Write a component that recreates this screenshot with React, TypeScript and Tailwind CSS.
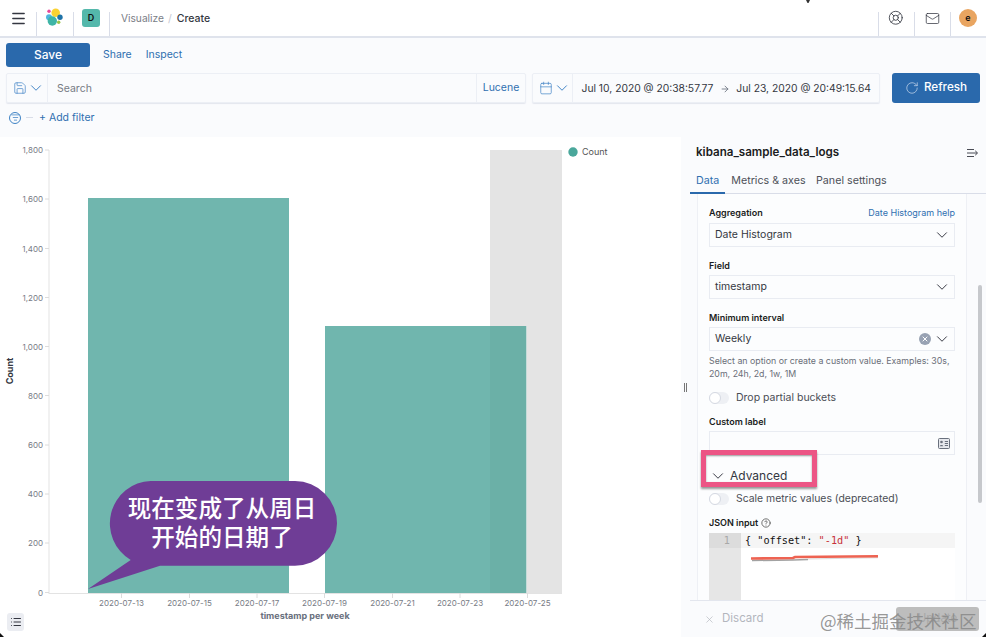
import React from "react";
import { ChevronDown, Menu, LifeBuoy, Mail, Save, Calendar, RotateCw, ArrowRight, X, List, CircleHelp, ListFilter } from "lucide-react";

const Chev = ({ className = "" }: { className?: string }) => (
  <ChevronDown size={18} strokeWidth={1.3} className={`-mx-[4px] -my-[3px] shrink-0 ${className}`} />
);

function Logo() {
  return (
    <svg width="20" height="20" viewBox="0 0 20 20">
      <circle cx="10.7" cy="4.7" r="4.3" fill="#fbd232" />
      <circle cx="4" cy="3.3" r="1.7" fill="#e8499b" />
      <circle cx="4" cy="9.3" r="3" fill="#4fb6e0" />
      <circle cx="15" cy="9.3" r="2.7" fill="#1f73a8" />
      <circle cx="7.3" cy="13" r="4.7" fill="#3fb5a6" />
      <circle cx="13.7" cy="14.3" r="1.7" fill="#9ac54a" />
    </svg>
  );
}

function Header() {
  return (
    <div className="flex h-[38px] items-stretch border-b-2 border-[#dfe3ec] bg-white text-[10.5px]">
      <div className="flex w-[36px] items-center justify-center">
        <Menu size={17} className="text-[#343741]" strokeWidth={2} />
      </div>
      <div className="mt-[12px] w-px bg-[#d9dde8]" />
      <div className="flex w-[36px] items-center justify-center"><Logo /></div>
      <div className="mt-[12px] w-px bg-[#d9dde8]" />
      <div className="flex w-[35px] items-center justify-center pr-[1px]">
        <div className="flex h-[18px] w-[18px] items-center justify-center rounded-[3px] bg-[#54b8ab] text-[9px] font-semibold text-[#111]">D</div>
      </div>
      <div className="mt-[12px] w-px bg-[#d9dde8]" />
      <div className="flex flex-1 items-center gap-[4px] pl-[11px] pt-[1px]">
        <span className="text-[10.2px] text-[#7a7d86]">Visualize</span>
        <span className="text-[#c5c9d2]">/</span>
        <span className="ml-[1px] font-medium text-[#343741]">Create</span>
      </div>
      <div className="mt-[12px] w-px bg-[#d9dde8]" />
      <div className="flex w-[35px] items-center justify-center pr-[1px]"><LifeBuoy size={15.5} strokeWidth={1.3} className="text-[#343741]" /></div>
      <div className="mt-[12px] w-px bg-[#d9dde8]" />
      <div className="flex w-[35px] items-center justify-center pr-[1px]"><Mail size={15} strokeWidth={1.2} className="text-[#343741]" /></div>
      <div className="mt-[12px] w-px bg-[#d9dde8]" />
      <div className="flex w-[35px] items-center justify-center pr-[1px]">
        <div className="flex h-[18px] w-[18px] items-center justify-center rounded-full bg-[#e9a561] text-[9px] font-semibold text-[#111]">e</div>
      </div>
    </div>
  );
}

function Toolbar() {
  return (
    <div className="bg-[#fafbfd] px-[6px]">
      <div className="mt-[5px] flex h-[24px] items-center gap-[13px] text-[10.5px] text-[#2f6fb0]">
        <div className="flex h-[24px] w-[84px] items-center justify-center rounded-[3px] bg-[#2a69ac] text-[12px] font-medium text-white">Save</div>
        <span>Share</span>
        <span className="ml-[1px]">Inspect</span>
      </div>
      <div className="mt-[6px] flex h-[30px] items-stretch text-[10.5px]">
        <div className="flex flex-1 items-stretch rounded-[2px] border border-[#eceff5] shadow-[0_1px_1px_#e3e6ee]">
          <div className="flex w-[41px] items-center justify-center gap-[4px] border-r border-[#eceff5] text-[#3f83c5]">
            <Save size={14} strokeWidth={1.2} />
            <Chev />
          </div>
          <div className="flex flex-1 items-center pl-[9px] pt-[1px] text-[#777b85]">Search</div>
          <div className="flex w-[49px] items-center justify-center border-l border-[#eceff5] text-[#2f6fb0]">Lucene</div>
        </div>
        <div className="ml-[6px] flex w-[348px] items-stretch rounded-[2px] border border-[#eceff5] shadow-[0_1px_1px_#e3e6ee]">
          <div className="flex w-[40px] items-center justify-center gap-[4px] border-r border-[#eceff5] text-[#3f83c5]">
            <Calendar size={14} strokeWidth={1.2} />
            <Chev />
          </div>
          <div className="flex flex-1 items-center gap-[6.5px] pl-[8.5px] pt-[1px] text-[10.3px] text-[#343741]">
            <span>Jul 10, 2020 @ 20:38:57.77</span>
            <ArrowRight size={10} className="text-[#69707d]" />
            <span>Jul 23, 2020 @ 20:49:15.64</span>
          </div>
        </div>
        <div className="ml-[12px] flex w-[88px] items-center justify-center gap-[5px] rounded-[3px] bg-[#2a69ac] text-[11.7px] font-medium text-white">
          <RotateCw size={14} strokeWidth={1.2} className="text-[#c9d9ec]" />
          <span>Refresh</span>
        </div>
      </div>
      <div className="flex h-[34px] items-center pb-[5px] pl-[3px] text-[10.5px] text-[#2f6fb0]">
        <div className="flex h-[12px] w-[12px] items-center justify-center rounded-full border border-[#3f83c5]"><ListFilter size={9} className="text-[#3f83c5]" /></div>
        <div className="ml-[5px] h-px w-[7px] bg-[#d9dde8]" />
        <span className="ml-[6px]">+ Add filter</span>
      </div>
    </div>
  );
}

function Chart() {
  const ys: [string, number][] = [["1,800",150],["1,600",199],["1,400",248.5],["1,200",297.5],["1,000",346.5],["800",395.5],["600",445],["400",494],["200",543],["0",592.5]];
  const xs: [string, number][] = [["2020-07-13",121.5],["2020-07-15",189.5],["2020-07-17",257],["2020-07-19",324.5],["2020-07-21",392.5],["2020-07-23",460],["2020-07-25",527.5]];
  return (
    <div className="relative h-[500px] w-[681px] shrink-0 bg-white">
      <svg width="681" height="500" viewBox="0 137 681 500" className="block" fontFamily="Inter, sans-serif">
        <rect x="490" y="150" width="72" height="443" fill="#e4e4e4" />
        <rect x="88" y="198" width="201" height="395" fill="#70b6ae" />
        <rect x="325" y="326" width="201" height="267" fill="#70b6ae" />
        <rect x="490" y="326" width="36" height="267" fill="#6bb0a7" />
        <rect x="526" y="326" width="1" height="267" fill="#c5dcd9" />
        <path d="M49 150V594M49 593.5H562" stroke="#e3e3e3" strokeWidth="1" fill="none" />
        {ys.map(([t, y]) => (
          <g key={t}>
            <line x1="45" x2="49" y1={y} y2={y} stroke="#dcdcdc" />
            <text x="43" y={y + 3} textAnchor="end" fontSize="8" fill="#777b85">{t}</text>
          </g>
        ))}
        {xs.map(([t, x]) => (
          <g key={t}>
            <line x1={x} x2={x} y1="593" y2="598" stroke="#dcdcdc" />
            <text x={x} y="606" textAnchor="middle" fontSize="8" fill="#777b85">{t}</text>
          </g>
        ))}
        <text x="305" y="619" textAnchor="middle" fontSize="9" fontWeight="700" fill="#69707d">timestamp per week</text>
        <text transform="translate(13 371) rotate(-90)" textAnchor="middle" fontSize="9" fontWeight="700" fill="#343741">Count</text>
        <circle cx="573" cy="152" r="4.7" fill="#4aa79b" />
        <text x="582" y="155" fontSize="9" fill="#555">Count</text>
      </svg>
      <div className="absolute bottom-[6px] left-[7px] flex h-[18px] w-[17px] items-center justify-center rounded-[3px] bg-[#ebedf2]">
        <List size={12} className="text-[#343741]" />
      </div>
      <svg className="absolute left-[85px] top-[343px]" width="256" height="112" viewBox="85 480 256 112">
        <path d="M160 565.7 L88 589 L130.7 560 A 42 42.4 0 0 1 150.7 481 H295 A 42 42.35 0 0 1 295 565.7 Z" fill="#6f3d96" />
      </svg>
      <div className="absolute left-[108px] top-[356px] w-[228px] text-center text-[23.6px] leading-[29px] font-medium text-white font-['Noto_Sans_CJK_SC',sans-serif]">
        <div>现在变成了从周日</div>
        <div>开始的日期了</div>
      </div>
    </div>
  );
}

function Select({ value, clear }: { value: string; clear?: boolean }) {
  return (
    <div className="flex h-[24px] items-center border border-[#e9ecf2] pl-[5px] pr-[7px] text-[10.5px] text-[#343741]">
      <span className="flex-1">{value}</span>
      {clear && (
        <div className="mr-[6px] flex h-[12px] w-[12px] items-center justify-center rounded-full bg-[#98a2b3]">
          <X size={8} strokeWidth={3} className="text-white" />
        </div>
      )}
      <Chev className="text-[#343741]" />
    </div>
  );
}

function Label({ children }: { children: React.ReactNode }) {
  return <div className="text-[9px] leading-[10px] font-semibold text-[#1a1c21]">{children}</div>;
}

function Toggle() {
  return (
    <div className="flex h-[12px] w-[20px] items-center rounded-full bg-[#eef0f4]">
      <div className="h-[12px] w-[12px] rounded-full border border-[#d5d9e2] bg-white" />
    </div>
  );
}

function CardIcon() {
  return (
    <svg width="12" height="11" viewBox="0 0 12 11" fill="none">
      <rect x="0.5" y="0.5" width="11" height="10" rx="1" fill="#e6e8ed" stroke="#69707d" />
      <circle cx="3.5" cy="4" r="1.3" fill="#69707d" />
      <path d="M1.8 8.2C2 6.6 5 6.6 5.2 8.2Z" fill="#69707d" />
      <path d="M6.8 3.5H10M6.8 5.5H10M6.8 7.5H10" stroke="#69707d" />
    </svg>
  );
}

function Panel() {
  return (
    <div className="relative flex h-[500px] flex-1 flex-col bg-[#fafbfd]">
      <div className="flex h-[31px] items-center justify-between pl-[6px] pr-[7px]">
        <span className="text-[11.6px] font-semibold text-[#1a1c21]">kibana_sample_data_logs</span>
        <svg width="12" height="10" viewBox="0 0 12 10" fill="none" stroke="#343741" strokeWidth="0.9"><path d="M0 1.5H7M0 5H10M0 8.5H7M8.2 2.8L10.6 5L8.2 7.2" /></svg>
      </div>
      <div className="flex h-[26px] items-center border-b border-[#d9dde8] pt-[2px] pl-[6px] text-[10.7px]">
        <div className="relative flex h-full items-center text-[#2f6fb0]">
          Data
          <div className="absolute -left-[6px] -right-[6px] bottom-[-1px] h-[2px] bg-[#2a69ac]" />
        </div>
        <span className="ml-[12px] text-[#4d5058]">Metrics & axes</span>
        <span className="ml-[10.5px] text-[#4d5058]">Panel settings</span>
      </div>
      <div className="relative min-h-0 flex-1 overflow-hidden">
        <div className="ml-[7px] h-full w-[270px] border-x border-[#eef0f5] bg-[#fcfdfe] px-[11px] pt-[14px]">
          <div className="flex items-center justify-between pb-[5px]">
            <Label>Aggregation</Label>
            <span className="text-[9px] leading-[10px] text-[#2f6fb0]">Date Histogram help</span>
          </div>
          <Select value="Date Histogram" />
          <div className="mt-[14px] pb-[4px]"><Label>Field</Label></div>
          <Select value="timestamp" />
          <div className="mt-[14px] pb-[4px]"><Label>Minimum interval</Label></div>
          <Select value="Weekly" clear />
          <div className="mt-[3px] text-[8.8px] leading-[13px] text-[#6a6e78]">Select an option or create a custom value. Examples: 30s, 20m, 24h, 2d, 1w, 1M</div>
          <div className="mt-[12px] flex h-[12px] items-center gap-[7px] text-[10.5px] text-[#4a4d55]"><Toggle /><span>Drop partial buckets</span></div>
          <div className="mt-[13px] pb-[4px]"><Label>Custom label</Label></div>
          <div className="flex h-[24px] items-center justify-end border border-[#e9ecf2] pr-[4px]"><CardIcon /></div>
          <div className="mt-[14px] flex h-[14px] items-center gap-[7px] pl-[4px] text-[12px] text-[#343741]"><Chev /><span>Advanced</span></div>
          <div className="mt-[10px] flex h-[12px] items-center gap-[7px] text-[10.4px] text-[#4a4d55]"><Toggle /><span>Scale metric values (deprecated)</span></div>
          <div className="mt-[13px] flex items-center gap-[3px] pb-[5px]"><Label>JSON input</Label><CircleHelp size={10} className="text-[#555]" /></div>
          <div className="flex h-[80px] bg-white font-['DejaVu_Sans_Mono',monospace] text-[10.2px]">
            <div className="w-[32px] bg-[#e6e6e6]"><div className="h-[15px] bg-[#dcdcdc] pr-[11px] text-right leading-[15px] text-[#a8a8a8]">1</div></div>
            <div className="flex-1"><div className="h-[15px] whitespace-pre bg-[#f5f5f5] pl-[4px] leading-[15px] text-[#111]">{'{ "offset": '}<span className="text-[#c8313a]">"-1d"</span>{' }'}</div></div>
          </div>
        </div>
        <div className="absolute right-[4px] top-[91px] h-[218px] w-[4px] rounded-full bg-[#c6c8cc]" />
      </div>
      <div className="absolute bottom-0 left-0 right-0 flex h-[37px] items-center border-t border-[#e3e6ee] bg-[#fafbfd] pl-[14px] text-[11.5px] text-[#b3b6bd]">
        <X size={11} strokeWidth={1.4} />
        <span className="ml-[7px]">Discard</span>
        <div className="absolute right-[7px] top-[6px] flex h-[24px] w-[83px] items-center justify-center rounded-[3px] bg-[#bdbdbd] text-[#a8a8a8]">Update</div>
      </div>
    </div>
  );
}

export default function App() {
  return (
    <div className="relative h-[637px] w-[986px] overflow-hidden bg-[#fafbfd] font-['Inter',sans-serif]">
      <Header />
      <Toolbar />
      <div className="flex">
        <Chart />
        <div className="flex w-[9px] items-center justify-center">
          <div className="h-[9px] w-[3px] border-x border-[#777]" />
        </div>
        <Panel />
      </div>
      <div className="absolute left-[701px] top-[450px] h-[37px] w-[116px] border-[5px] border-[#ec5585] shadow-[0_2px_2px_rgba(0,0,0,0.4),inset_0_1px_2px_rgba(0,0,0,0.4)]" />
      <svg className="absolute left-[748px] top-[552px]" width="134" height="12" viewBox="0 0 134 12" fill="none">
        <path d="M4 8.5 L45 8 L60 7.5" stroke="#555" strokeOpacity="0.55" strokeWidth="1.5" />
        <path d="M60 7 L130 5.6" stroke="#555" strokeOpacity="0.2" strokeWidth="1.2" />
        <path d="M3 6.5 L45 6 L47 5 L130 4.2" stroke="#ee6352" strokeWidth="2.6" />
      </svg>
      <div className="absolute left-[820px] top-[610px] text-[17.5px] leading-[22px] text-[#8a8a8a]/90 font-['Noto_Sans_CJK_SC',sans-serif]">@稀土掘金技术社区</div>
      <svg className="absolute bottom-0 left-0" width="4" height="4" viewBox="0 0 4 4"><path d="M0 0L4 4H0Z" fill="#111" /></svg>
      <svg className="absolute bottom-0 right-0" width="4" height="4" viewBox="0 0 4 4"><path d="M4 0L0 4H4Z" fill="#111" /></svg>
      <svg className="absolute left-[805px] top-0" width="6" height="3" viewBox="0 0 6 3"><path d="M1 0H5L3.5 3H2.5Z" fill="#333" /></svg>
    </div>
  );
}
